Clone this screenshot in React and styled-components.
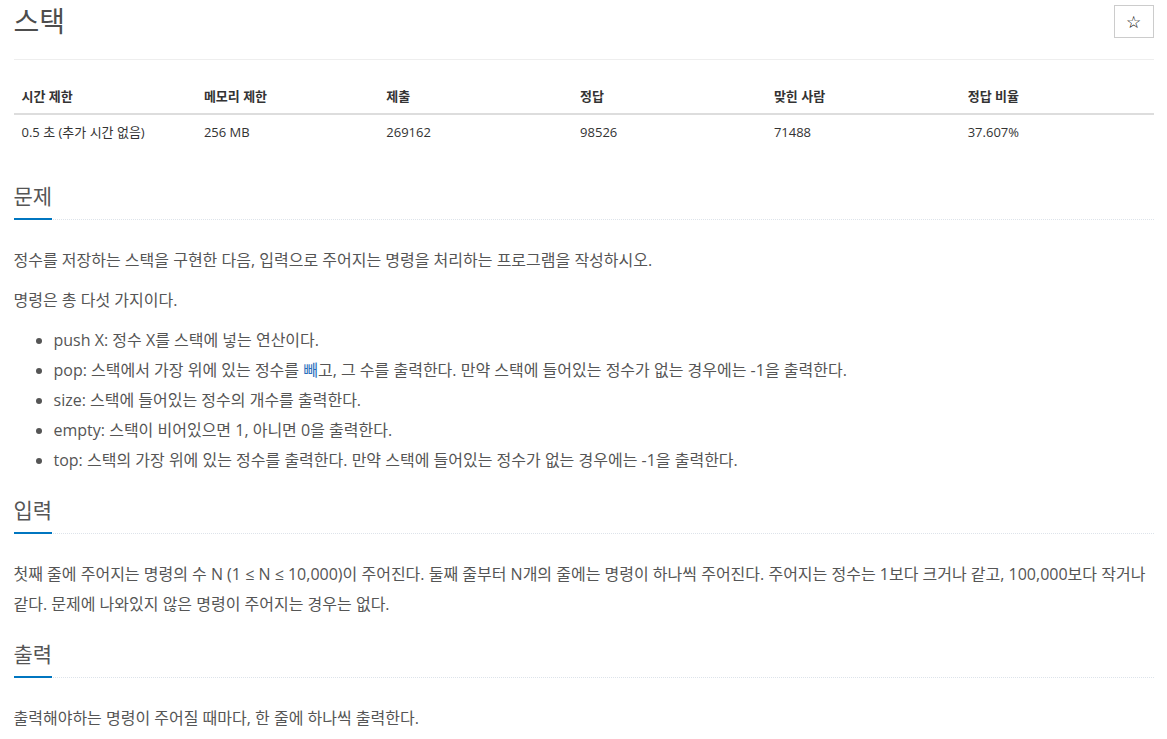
import React from "react";
import styled, { createGlobalStyle } from "styled-components";

const GlobalStyle = createGlobalStyle`
  html, body {
    margin: 0;
    padding: 0;
    background: #ffffff;
  }
  body {
    font-family: "Open Sans", "Noto Sans CJK KR", sans-serif;
    color: #555555;
  }
`;

const columns = [
  { label: "시간 제한", value: "0.5 초 (추가 시간 없음)", width: "16%" },
  { label: "메모리 제한", value: "256 MB", width: "16%" },
  { label: "제출", value: "269162", width: "17%" },
  { label: "정답", value: "98526", width: "17%" },
  { label: "맞힌 사람", value: "71488", width: "17%" },
  { label: "정답 비율", value: "37.607%", width: "17%" },
];

const commands = [
  "push X: 정수 X를 스택에 넣는 연산이다.",
  null,
  "size: 스택에 들어있는 정수의 개수를 출력한다.",
  "empty: 스택이 비어있으면 1, 아니면 0을 출력한다.",
  "top: 스택의 가장 위에 있는 정수를 출력한다. 만약 스택에 들어있는 정수가 없는 경우에는 -1을 출력한다.",
];

const Section = ({ title, children }) => (
  <SectionWrap>
    <HeadlineWrap>
      <Headline>{title}</Headline>
    </HeadlineWrap>
    <SectionBody>{children}</SectionBody>
  </SectionWrap>
);

const App = () => {
  return (
    <>
      <GlobalStyle />
      <Container>
        <PageHeader>
          <Title>스택</Title>
          <StarButton type="button">☆</StarButton>
        </PageHeader>

        <InfoTable>
          <colgroup>
            {columns.map((c) => (
              <col key={c.label} style={{ width: c.width }} />
            ))}
          </colgroup>
          <thead>
            <tr>
              {columns.map((c) => (
                <Th key={c.label}>{c.label}</Th>
              ))}
            </tr>
          </thead>
          <tbody>
            <tr>
              {columns.map((c) => (
                <Td key={c.label}>{c.value}</Td>
              ))}
            </tr>
          </tbody>
        </InfoTable>

        <Section title="문제">
          <Paragraph>
            정수를 저장하는 스택을 구현한 다음, 입력으로 주어지는 명령을 처리하는 프로그램을 작성하시오.
          </Paragraph>
          <Paragraph>명령은 총 다섯 가지이다.</Paragraph>
          <CommandList>
            {commands.map((text, i) =>
              text ? (
                <li key={i}>{text}</li>
              ) : (
                <li key={i}>
                  pop: 스택에서 가장 위에 있는 정수를 <Mark>빼</Mark>고, 그 수를 출력한다. 만약 스택에 들어있는
                  정수가 없는 경우에는 -1을 출력한다.
                </li>
              )
            )}
          </CommandList>
        </Section>

        <Section title="입력">
          <Paragraph>
            첫째 줄에 주어지는 명령의 수 N (1 ≤ N ≤ 10,000)이 주어진다. 둘째 줄부터 N개의 줄에는 명령이 하나씩
            주어진다. 주어지는 정수는 1보다 크거나 같고, 100,000보다 작거나 같다. 문제에 나와있지 않은 명령이
            주어지는 경우는 없다.
          </Paragraph>
        </Section>

        <Section title="출력">
          <Paragraph>출력해야하는 명령이 주어질 때마다, 한 줄에 하나씩 출력한다.</Paragraph>
        </Section>
      </Container>
    </>
  );
};

export default App;

const Container = styled.div`
  width: 1140px;
  margin: 0 auto;
`;

const PageHeader = styled.div`
  display: flex;
  justify-content: space-between;
  align-items: flex-start;
  padding: 5px 0 21px;
  border-bottom: 1px solid #eeeeee;
`;

const Title = styled.h1`
  margin: 0;
  font-size: 28px;
  line-height: 33px;
  font-weight: 400;
  color: #4d4d4d;
`;

const StarButton = styled.button`
  width: 40px;
  height: 33px;
  padding: 0;
  background: #ffffff;
  border: 1px solid #cccccc;
  border-radius: 0;
  font-family: "DejaVu Sans", sans-serif;
  font-size: 17px;
  color: #000000;
`;

const InfoTable = styled.table`
  width: 100%;
  margin: 19px 0 34px;
  border-collapse: collapse;
  table-layout: fixed;
  font-size: 13px;
  color: #333333;
`;

const Th = styled.th`
  padding: 8px;
  line-height: 18px;
  text-align: left;
  font-weight: 700;
  border-bottom: 2px solid #dddddd;
`;

const Td = styled.td`
  padding: 8px;
  line-height: 18px;
`;

const SectionWrap = styled.section`
  margin-top: 22px;
`;

const HeadlineWrap = styled.div`
  border-bottom: 1px dotted #dde3ea;
`;

const Headline = styled.h2`
  display: inline-block;
  margin: 0 0 -1px;
  padding-bottom: 9px;
  font-size: 21px;
  line-height: 26px;
  font-weight: 400;
  color: #555555;
  border-bottom: 2px solid #0076c0;
`;

const SectionBody = styled.div`
  margin-top: 25px;
  font-size: 16px;
  line-height: 30px;
  color: #555555;
`;

const Paragraph = styled.p`
  margin: 0 0 10px;
`;

const CommandList = styled.ul`
  margin: 0 0 10px;
  padding-left: 40px;
`;

const Mark = styled.span`
  color: #2a6ebb;
`;
